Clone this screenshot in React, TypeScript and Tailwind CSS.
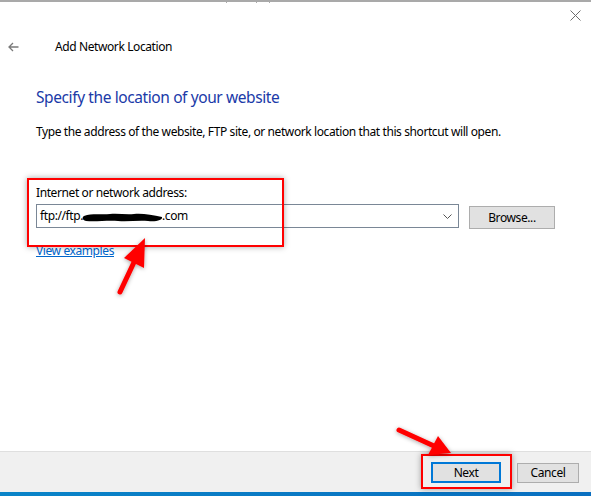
import React from "react";

export default function App() {
  return (
    <div
      className="relative w-[591px] h-[496px] bg-white flex flex-col overflow-hidden text-black tracking-[-0.4px]"
      style={{ fontFamily: '"Noto Sans", "Open Sans", sans-serif' }}
    >
      {/* top edge */}
      <div className="relative h-[2px] bg-[#a9a9a9] shrink-0">
        <div className="absolute left-[226px] top-0 w-[1px] h-[3px] bg-[#a9a9a9]" />
        <div className="absolute left-[256px] top-0 w-[1px] h-[3px] bg-[#a9a9a9]" />
        <div className="absolute left-[269px] top-0 w-[1px] h-[3px] bg-[#a9a9a9]" />
      </div>

      {/* close button row */}
      <div className="flex justify-end h-[25px] pr-[10px] pt-[8px] shrink-0">
        <svg width="11" height="11" viewBox="0 0 11 11" className="block">
          <path d="M0.5 0.5 L10.5 10.5 M10.5 0.5 L0.5 10.5" stroke="#6e6e6e" strokeWidth="1" />
        </svg>
      </div>

      {/* header */}
      <div className="flex items-center h-[40px] shrink-0">
        <div className="w-[55px] pl-[8px] flex items-center">
          <svg width="11" height="10" viewBox="0 0 11 10">
            <path d="M10.5 5 H1 M5 1 L1 5 L5 9" stroke="#7a7a7a" strokeWidth="1.3" fill="none" />
          </svg>
        </div>
        <span className="text-[12px] leading-none">Add Network Location</span>
      </div>

      {/* content */}
      <div className="flex-1 pl-[36px] pt-[20px]">
        <h1 className="text-[15.5px] leading-[20px] text-[#1a3aa8]">Specify the location of your website</h1>
        <p className="mt-[17px] text-[12px] leading-[16px]">
          Type the address of the website, FTP site, or network location that this shortcut will open.
        </p>

        <div className="mt-[45px] text-[12px] leading-[16px]">Internet or network address:</div>

        <div className="mt-[3px] flex items-start gap-[10px]">
          <div className="relative w-[423px] h-[24px] border border-[#7a8796] bg-white flex items-center pl-[3px]">
            <span className="text-[12px] leading-none">ftp://ftp.</span>
            <svg width="82" height="12" viewBox="0 0 82 12" className="-ml-[1px] mt-[3px] block">
              <path
                d="M2 4 C10 1 20 3 28 2 C36 1 44 3 52 2 C60 1 70 3 80 5 C81 8 74 10 66 9 C56 8 46 10 36 9 C26 8 14 10 4 9 C0 8 0 5 2 4 Z"
                fill="#000"
              />
            </svg>
            <span className="text-[12px] leading-none -ml-[2px]">.com</span>
            <svg width="9" height="5" viewBox="0 0 9 5" className="absolute right-[6px] top-[9px]">
              <path d="M0.5 0.5 L4.5 4.5 L8.5 0.5" stroke="#555" strokeWidth="1" fill="none" />
            </svg>
          </div>
          <button className="mt-[2px] w-[86px] h-[23px] bg-[#e1e1e1] border border-[#adadad] text-[12px] leading-none flex items-center justify-center">
            Browse...
          </button>
        </div>

        <a className="inline-block mt-[14px] text-[12px] leading-[16px] text-[#0066cc] underline">View examples</a>
      </div>

      {/* footer */}
      <div className="h-[41px] shrink-0 bg-[#f0f0f0] border-t border-[#dfdfdf] flex items-center justify-end gap-[16px] pr-[12px] pt-[1px]">
        <button className="w-[70px] h-[21px] bg-[#e1e1e1] border-2 border-[#0078d7] text-[12px] leading-none flex items-center justify-center">
          Next
        </button>
        <button className="w-[62px] h-[20px] bg-[#e1e1e1] border border-[#adadad] text-[12px] leading-none flex items-center justify-center">
          Cancel
        </button>
      </div>
      <div className="h-[4px] shrink-0 bg-gradient-to-r from-[#0a84c8] to-[#0a6fc0]" />

      {/* annotation overlays */}
      <div className="absolute left-[27px] top-[178px] w-[257px] h-[69px] border-2 border-[#ff0000] shadow-[0_0_6px_rgba(0,0,0,0.35)] pointer-events-none" />
      <div className="absolute left-[421px] top-[454px] w-[91px] h-[35px] border-2 border-[#ff0000] shadow-[0_0_6px_rgba(0,0,0,0.35)] pointer-events-none" />

      <svg className="absolute left-0 top-0 pointer-events-none" width="591" height="496" viewBox="0 0 591 496">
        <defs>
          <filter id="sh" x="-50%" y="-50%" width="200%" height="200%">
            <feDropShadow dx="0" dy="1" stdDeviation="2" floodColor="#000" floodOpacity="0.35" />
          </filter>
        </defs>
        <g filter="url(#sh)" fill="#ff0000" stroke="#ff0000" strokeLinecap="round">
          <line x1="120" y1="292" x2="136" y2="258" strokeWidth="5" />
          <polygon points="145,238 124,258 144,268" stroke="none" />
          <line x1="399" y1="430" x2="434" y2="446" strokeWidth="5" />
          <polygon points="451,453 428,455 438,436" stroke="none" />
        </g>
      </svg>
    </div>
  );
}
